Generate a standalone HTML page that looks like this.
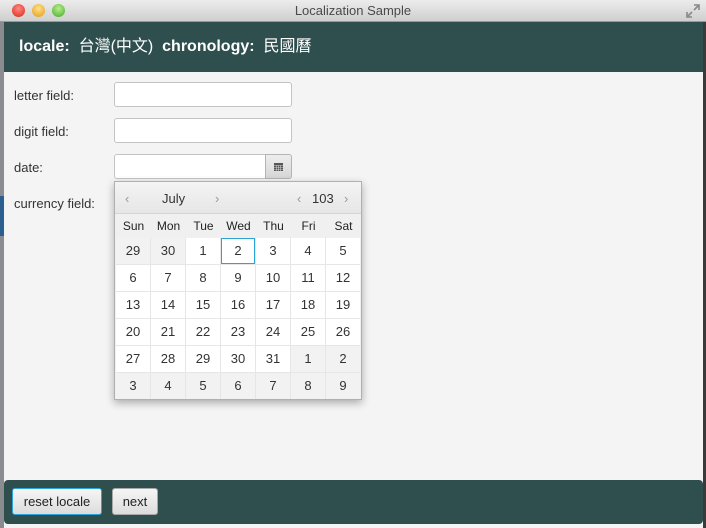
<!DOCTYPE html>
<html><head><meta charset="utf-8"><style>
*{box-sizing:border-box;margin:0;padding:0}
body{width:706px;height:528px;overflow:hidden;background:#3a3a3a;font-family:"Liberation Sans","Noto Sans CJK TC",sans-serif;position:relative}
.win{position:absolute;left:4px;top:0;width:699px;height:528px;background:#f4f4f4}
.left{position:absolute;left:0;top:0;width:4px;height:528px;background:#8a8c90}
.left .b{position:absolute;left:0;top:196px;width:4px;height:40px;background:#2a5f8f}
.title{position:absolute;left:0;top:0;width:706px;height:22px;background:linear-gradient(#ececec,#cfcfcf);border-bottom:1px solid #9a9a9a;text-align:center;font-size:13px;line-height:22px;color:#4a4a4a}
.dot{position:absolute;top:4px;width:13px;height:13px;border-radius:50%}
.hdr{position:absolute;left:4px;top:22px;width:699px;height:50px;background:#2f4f4f;color:#fff;font-size:16px;font-weight:bold;line-height:50px;padding-left:15px}
.hdr span{font-weight:normal}
.lbl{position:absolute;left:14px;font-size:13px;color:#333}
.tf{position:absolute;left:114px;width:178px;height:25px;background:#fff;border:1px solid #c4c4c4;border-radius:3px}
.pop{position:absolute;left:114px;top:181px;width:248px;height:219px;background:#f0f0f0;border:1px solid #b0b0b0;box-shadow:0 3px 8px rgba(0,0,0,.3)}
.ph{height:32px;background:linear-gradient(#f4f4f4,#e6e6e6);border-bottom:1px solid #d4d4d4;position:relative;font-size:13px;color:#333}
.ph div{position:absolute;top:9px}
.ar{color:#999;font-size:13px}
.dn{display:flex;height:24px;font-size:12px;color:#222;padding-left:1px}
.dn div{width:35px;text-align:center;line-height:24px}
.g{display:grid;grid-template-columns:repeat(7,34px);grid-auto-rows:26px;gap:1px;background:#e6e6e6;margin-left:1px;width:244px}
.g div{background:#fff;text-align:center;line-height:26px;font-size:13px;color:#333}
.g .o{background:#f2f2f2}
.g .s{box-shadow:inset 0 0 0 1px #2ea3d6}
.bot{position:absolute;left:4px;top:480px;width:699px;height:44px;background:#2f4f4f;border-radius:4px}
.btn{position:absolute;top:488px;height:27px;background:linear-gradient(#f6f6f6,#dcdcdc);border:1px solid #a8a8a8;border-radius:3px;font-size:13px;line-height:25px;text-align:center;color:#222}
</style></head><body>
<div class="left"><div class="b"></div></div>
<div class="win"></div>
<div class="title">Localization Sample
<div class="dot" style="left:12px;background:radial-gradient(circle at 50% 35%,#ff8a80,#d8261c)"></div>
<div class="dot" style="left:32px;background:radial-gradient(circle at 50% 35%,#ffe08a,#e39b12)"></div>
<div class="dot" style="left:52px;background:radial-gradient(circle at 50% 35%,#b6f08a,#44a82a)"></div>
<svg style="position:absolute;right:6px;top:4px" width="14" height="14" viewBox="0 0 14 14"><path d="M8 1h5v5M13 1L8 6M6 13H1V8M1 13l5-5" stroke="#888" stroke-width="1.6" fill="none"/></svg>
</div>
<div class="hdr">locale:&nbsp; <span>台灣(中文)</span>&nbsp; chronology:&nbsp; <span>民國曆</span></div>
<div class="lbl" style="top:88px">letter field:</div>
<div class="lbl" style="top:124px">digit field:</div>
<div class="lbl" style="top:160px">date:</div>
<div class="lbl" style="top:196px">currency field:</div>
<div class="tf" style="top:82px"></div>
<div class="tf" style="top:118px"></div>
<div class="tf" style="top:154px;width:152px;border-radius:3px 0 0 3px"></div>
<div style="position:absolute;left:265px;top:154px;width:27px;height:25px;background:linear-gradient(#eee,#d6d6d6);border:1px solid #b4b4b4;border-radius:0 3px 3px 0">
<svg style="position:absolute;left:8px;top:8px" width="9" height="8"><rect width="9" height="8" fill="#555"/><path d="M0 2.5h9M0 4.5h9M0 6.5h9M2.5 2v6M4.5 2v6M6.5 2v6" stroke="#ccc" stroke-width=".6"/></svg></div>
<div class="pop">
<div class="ph"><div class="ar" style="left:10px">&lsaquo;</div><div style="left:47px">July</div><div class="ar" style="left:100px">&rsaquo;</div><div class="ar" style="left:182px">&lsaquo;</div><div style="left:197px">103</div><div class="ar" style="left:229px">&rsaquo;</div></div>
<div class="dn"><div>Sun</div><div>Mon</div><div>Tue</div><div>Wed</div><div>Thu</div><div>Fri</div><div>Sat</div></div>
<div class="g">
<div class="o">29</div><div class="o">30</div><div>1</div><div class="s">2</div><div>3</div><div>4</div><div>5</div>
<div>6</div><div>7</div><div>8</div><div>9</div><div>10</div><div>11</div><div>12</div>
<div>13</div><div>14</div><div>15</div><div>16</div><div>17</div><div>18</div><div>19</div>
<div>20</div><div>21</div><div>22</div><div>23</div><div>24</div><div>25</div><div>26</div>
<div>27</div><div>28</div><div>29</div><div>30</div><div>31</div><div class="o">1</div><div class="o">2</div>
<div class="o">3</div><div class="o">4</div><div class="o">5</div><div class="o">6</div><div class="o">7</div><div class="o">8</div><div class="o">9</div>
</div></div>
<div class="bot"></div>
<div class="btn" style="left:12px;width:90px;border-color:#2ea3d6">reset locale</div>
<div class="btn" style="left:112px;width:46px">next</div>
</body></html>
